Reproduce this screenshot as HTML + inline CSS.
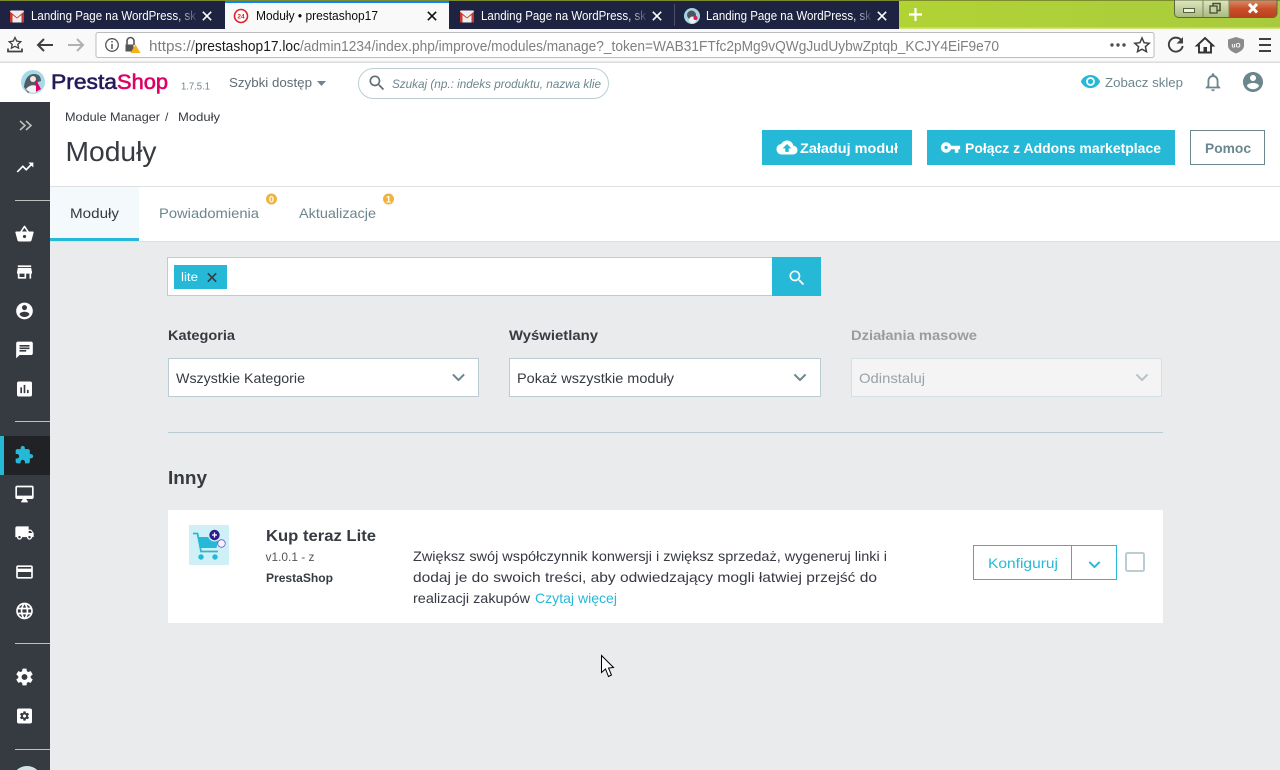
<!DOCTYPE html>
<html lang="pl"><head><meta charset="utf-8"><title>Moduły • prestashop17</title>
<style>
html,body{margin:0;padding:0;width:1280px;height:770px;overflow:hidden;background:#eaebec}
svg{display:block;position:absolute;left:0;top:0}
text{font-family:"Liberation Sans",Arial,sans-serif;font-size:14px;fill:#363a41;white-space:pre}
.b{font-weight:700}
.tab{font-size:12.5px;fill:#fff}
.url{font-size:14.5px;fill:#7f7f7f}
.ic{fill:#fff}
</style></head><body>
<svg width="1280" height="770" viewBox="0 0 1280 770" xmlns="http://www.w3.org/2000/svg">
<defs>
<linearGradient id="lime" x1="0" y1="0" x2="1" y2="0"><stop offset="0" stop-color="#a8cf2c"/><stop offset=".35" stop-color="#bfdc30"/><stop offset=".7" stop-color="#b2d334"/><stop offset="1" stop-color="#a8cb3e"/></linearGradient>
<linearGradient id="fd" x1="0" y1="0" x2="1" y2="0"><stop offset="0" stop-color="#1d2341" stop-opacity="0"/><stop offset="1" stop-color="#1d2341"/></linearGradient>
<linearGradient id="wb" x1="0" y1="0" x2="0" y2="1"><stop offset="0" stop-color="#dfe6c0"/><stop offset="1" stop-color="#a9b87e"/></linearGradient>
<linearGradient id="wr" x1="0" y1="0" x2="0" y2="1"><stop offset="0" stop-color="#d98a6a"/><stop offset=".5" stop-color="#c9502a"/><stop offset="1" stop-color="#b8401c"/></linearGradient>
<symbol id="gm" viewBox="0 0 14 12"><rect width="14" height="12" rx="1" fill="#eee"/><path d="M0 1 7 7 14 1V12H11.5V4.5L7 8 2.5 4.5V12H0Z" fill="#c9372c"/></symbol>
<symbol id="x" viewBox="0 0 12 12"><path d="M1 1 11 11M11 1 1 11" stroke="currentColor" stroke-width="1.9" fill="none"/></symbol>
<symbol id="chev" viewBox="0 0 14 8"><path d="M1 1 7 7 13 1" fill="none" stroke="currentColor" stroke-width="2.2"/></symbol>
<symbol id="search" viewBox="0 0 24 24"><path d="M15.5 14h-.79l-.28-.27C15.41 12.59 16 11.11 16 9.5 16 5.91 13.09 3 9.5 3S3 5.91 3 9.5 5.91 16 9.5 16c1.61 0 3.09-.59 4.23-1.57l.27.28v.79l5 4.99L20.49 19l-4.99-5zm-6 0C7.01 14 5 11.99 5 9.5S7.01 5 9.5 5 14 7.01 14 9.5 11.99 14 9.5 14z"/></symbol>
<symbol id="gear" viewBox="0 0 24 24"><path d="M19.43 12.98c.04-.32.07-.64.07-.98s-.03-.66-.07-.98l2.11-1.65c.19-.15.24-.42.12-.64l-2-3.46c-.12-.22-.39-.3-.61-.22l-2.49 1c-.52-.4-1.08-.73-1.69-.98l-.38-2.65C14.46 2.18 14.25 2 14 2h-4c-.25 0-.46.18-.49.42l-.38 2.65c-.61.25-1.17.59-1.69.98l-2.49-1c-.23-.09-.49 0-.61.22l-2 3.46c-.13.22-.07.49.12.64l2.11 1.65c-.04.32-.07.65-.07.98s.03.66.07.98l-2.11 1.65c-.19.15-.24.42-.12.64l2 3.46c.12.22.39.3.61.22l2.49-1c.52.4 1.08.73 1.69.98l.38 2.65c.03.24.24.42.49.42h4c.25 0 .46-.18.49-.42l.38-2.65c.61-.25 1.17-.59 1.69-.98l2.49 1c.23.09.49 0 .61-.22l2-3.46c.12-.22.07-.49-.12-.64l-2.11-1.65zM12 15.5c-1.93 0-3.5-1.57-3.5-3.5s1.57-3.5 3.5-3.5 3.5 1.57 3.5 3.5-1.57 3.5-3.5 3.5z"/></symbol>
</defs>

<!-- title bar -->
<rect width="1280" height="29" fill="url(#lime)"/>
<rect x="899" y="27.500" width="381" height="1.500" fill="#d2e678"/>
<rect width="1280" height="1" fill="#7d8b2c"/>
<rect x="0" y="1" width="899" height="28" fill="#1d2341"/>
<rect x="225" y="1" width="224" height="28" fill="#f9f9fa"/>
<rect x="225" y="1" width="224" height="2" fill="#0a84ff"/>
<rect x="674" y="4" width="1" height="22" fill="#4a5068"/>

<use href="#gm" x="10" y="10.500" width="14" height="12"/>
<text class="tab" x="31" y="20" textLength="165" lengthAdjust="spacingAndGlyphs">Landing Page na WordPress, sk</text>
<rect x="178" y="3" width="21" height="25" fill="url(#fd)"/>
<use href="#x" x="202" y="11" width="10" height="10" color="#fff"/>

<circle cx="241" cy="16" r="6.500" fill="#fff" stroke="#d8232a" stroke-width="1.600"/>
<text x="241" y="18.500" text-anchor="middle" style="font-size:6.500px;fill:#d8232a;font-weight:700">24</text>
<text class="tab" x="256" y="20" textLength="122" lengthAdjust="spacingAndGlyphs" style="fill:#0c0c0d">Moduły • prestashop17</text>
<use href="#x" x="427" y="11" width="10" height="10" color="#111"/>

<use href="#gm" x="460" y="10.500" width="14" height="12"/>
<text class="tab" x="481" y="20" textLength="165" lengthAdjust="spacingAndGlyphs">Landing Page na WordPress, sk</text>
<rect x="628" y="3" width="21" height="25" fill="url(#fd)"/>
<use href="#x" x="652" y="11" width="10" height="10" color="#fff"/>

<circle cx="692" cy="16" r="8" fill="#a8d4dc"/><circle cx="691.500" cy="15" r="4.500" fill="#4a5560"/><circle cx="692.500" cy="20" r="3.500" fill="#eee"/><circle cx="695.500" cy="18" r="2" fill="#d5185f"/>
<text class="tab" x="706" y="20" textLength="165" lengthAdjust="spacingAndGlyphs">Landing Page na WordPress, sk</text>
<rect x="853" y="3" width="21" height="25" fill="url(#fd)"/>
<use href="#x" x="877" y="11" width="10" height="10" color="#fff"/>

<path d="M915.500 8V21M909 14.500H922" stroke="#fff" stroke-width="2.200" fill="none"/>

<!-- window controls -->
<path d="M1174.500 0H1277V13.500a4 4 0 0 1-4 4H1178.500a4 4 0 0 1-4-4Z" fill="url(#wb)" stroke="#5d6b3c" stroke-width="1"/>
<path d="M1229 .5H1276.500V13.500a3.500 3.500 0 0 1-3.500 3.500H1229Z" fill="url(#wr)"/>
<path d="M1203 0V17M1229 0V17" stroke="#7e8a5e"/>
<rect x="1183.500" y="8.500" width="11" height="4" fill="#eef1e0" stroke="#56603c"/>
<rect x="1213" y="3.500" width="7" height="7" fill="none" stroke="#45502e" stroke-width="1.500"/><rect x="1210" y="6" width="7" height="7" fill="#c5cfa5" stroke="#45502e" stroke-width="1.300"/>
<path d="M1249 4 1257 12.500M1257 4 1249 12.500" stroke="#fff" stroke-width="3"/>

<!-- nav bar -->
<rect y="29" width="1280" height="33" fill="#f9f9fa"/>
<rect y="61.500" width="1280" height="1.500" fill="#dcdcdd"/>
<rect x="96" y="32.500" width="1058" height="25" rx="2" fill="#fff" stroke="#bcbcbe"/>
<g fill="none" stroke="#404040" stroke-width="1.700">
<path d="M15 37.500 16.800 41.200 20.800 41.700 17.800 44.400 18.600 48.200 15 46.300 11.400 48.200 12.200 44.400 9.200 41.700 13.200 41.200Z" stroke-width="1.300"/>
<path d="M8 48.500V51.500H22V48.500"/>
<path d="M53 45H38M44 39 38 45 44 51" stroke-width="2"/>
<path d="M83 45H68M77 39 83 45 77 51" stroke="#b1b1b3" stroke-width="2"/>
</g>
<circle cx="112" cy="45" r="6.300" fill="none" stroke="#555" stroke-width="1.300"/><path d="M112 44V49M112 41V42.500" stroke="#555" stroke-width="1.500"/>
<path d="M127 45V41a3.500 3.500 0 0 1 7 0V45" fill="none" stroke="#555" stroke-width="1.600"/><rect x="125.500" y="44.500" width="8" height="7" fill="#555"/>
<path d="M135.500 44.500 140.500 53H130.500Z" fill="#f6b01e"/>
<text class="url" x="149" y="51" textLength="46" lengthAdjust="spacingAndGlyphs">https://</text>
<text class="url" x="195" y="51" textLength="105" lengthAdjust="spacingAndGlyphs" style="fill:#1a1a1a">prestashop17.loc</text>
<text class="url" x="300" y="51" textLength="699" lengthAdjust="spacingAndGlyphs">/admin1234/index.php/improve/modules/manage?_token=WAB31FTfc2pMg9vQWgJudUybwZptqb_KCJY4EiF9e70</text>
<g fill="#505050"><circle cx="1112" cy="45" r="1.700"/><circle cx="1118" cy="45" r="1.700"/><circle cx="1124" cy="45" r="1.700"/></g>
<path d="M1142 38 1144.100 42.700 1149.200 43.300 1145.400 46.700 1146.500 51.700 1142 49.200 1137.500 51.700 1138.600 46.700 1134.800 43.300 1139.900 42.700Z" fill="none" stroke="#404040" stroke-width="1.500"/>
<path d="M1181.500 40.500a7 7 0 1 0 1.200 5.500" fill="none" stroke="#404040" stroke-width="1.900"/><path d="M1183 37V43.500H1176.500Z" fill="#404040"/>
<path d="M1205 38 1213 45.500H1211V52.500H1199V45.500H1197Z" fill="none" stroke="#333" stroke-width="1.900"/><rect x="1203.500" y="47" width="3.500" height="5.500" fill="#333"/>
<path d="M1236 37 1244 39.500V45.500C1244 49.500 1240 52 1236 53.500 1232 52 1228 49.500 1228 45.500V39.500Z" fill="#8b8b8c"/><text x="1236" y="47.500" text-anchor="middle" style="font-size:6.500px;fill:#fff;font-weight:700">uO</text>
<path d="M1259 39H1271M1259 45H1271M1259 51H1271" stroke="#404040" stroke-width="2"/>

<!-- app header -->
<rect y="63" width="1280" height="123" fill="#fff"/>
<circle cx="33" cy="82" r="12" fill="#a5dbe8"/>
<path d="M24 87C25 78 29 74 34 74 39 74 41 77 41 81L38 82 35 89 28 93Z" fill="#4f5b66"/>
<path d="M26 89C30 84 36 84 40 89 38 93 30 95 26 89Z" fill="#f2f2f2"/>
<circle cx="33" cy="79" r="3" fill="#f3e9dc"/>
<path d="M36 80 41 89 36 92Z" fill="#df0067"/>
<text x="51" y="89" textLength="66" lengthAdjust="spacingAndGlyphs" style="font-size:21px;fill:#251b5b;stroke:#251b5b;stroke-width:.6">Presta</text>
<text x="117" y="89" textLength="51" lengthAdjust="spacingAndGlyphs" style="font-size:21px;fill:#df0067;stroke:#df0067;stroke-width:.6">Shop</text>
<text x="181" y="89.500" textLength="29" lengthAdjust="spacingAndGlyphs" style="font-size:10px;fill:#6c868e">1.7.5.1</text>
<text x="229" y="87" textLength="83" lengthAdjust="spacingAndGlyphs" style="font-size:13px;fill:#5e6c75">Szybki dostęp</text>
<path d="M317 81H326L321.500 86Z" fill="#6c868e"/>
<rect x="358.500" y="68.500" width="250" height="30" rx="15" fill="#fff" stroke="#bbcdd2"/>
<use href="#search" x="367" y="73" width="20" height="20" fill="#5e6c75"/>
<text x="392" y="88" textLength="209" lengthAdjust="spacingAndGlyphs" style="font-size:12px;font-style:italic;fill:#6c868e">Szukaj (np.: indeks produktu, nazwa klie</text>
<svg x="1080" y="71" width="21" height="21" viewBox="0 0 24 24" fill="#25b9d7"><path d="M12 4.500C7 4.500 2.730 7.610 1 12c1.730 4.390 6 7.500 11 7.500s9.270-3.110 11-7.500c-1.730-4.390-6-7.500-11-7.500zM12 17c-2.760 0-5-2.240-5-5s2.240-5 5-5 5 2.240 5 5-2.240 5-5 5zm0-8c-1.660 0-3 1.340-3 3s1.340 3 3 3 3-1.340 3-3-1.340-3-3-3z"/></svg>
<text x="1105" y="87" textLength="78" lengthAdjust="spacingAndGlyphs" style="font-size:13px;fill:#6c868e">Zobacz sklep</text>
<svg x="1202" y="71" width="22" height="22" viewBox="0 0 24 24" fill="#6c868e"><path d="M12 22c1.100 0 2-.9 2-2h-4c0 1.100.9 2 2 2zm6-6v-5c0-3.070-1.630-5.640-4.500-6.320V4c0-.83-.67-1.500-1.500-1.500s-1.500.67-1.500 1.500v.68C7.640 5.360 6 7.920 6 11v5l-2 2v1h16v-1l-2-2zm-2 1H8v-6c0-2.480 1.510-4.500 4-4.500s4 2.020 4 4.500v6z"/></svg>
<svg x="1241" y="70" width="24" height="24" viewBox="0 0 24 24" fill="#6c868e"><path d="M12 2C6.480 2 2 6.480 2 12s4.480 10 10 10 10-4.480 10-10S17.520 2 12 2zm0 3c1.660 0 3 1.340 3 3s-1.340 3-3 3-3-1.340-3-3 1.340-3 3-3zm0 14.200c-2.500 0-4.710-1.280-6-3.220.03-1.990 4-3.080 6-3.080 1.990 0 5.970 1.090 6 3.080-1.290 1.940-3.500 3.220-6 3.220z"/></svg>

<text x="65" y="121" textLength="95" lengthAdjust="spacingAndGlyphs" style="font-size:12px">Module Manager</text>
<text x="165" y="121" style="font-size:12px">/</text>
<text x="178" y="121" textLength="42" lengthAdjust="spacingAndGlyphs" style="font-size:12px">Moduły</text>
<text x="65.500" y="161" textLength="91" lengthAdjust="spacingAndGlyphs" style="font-size:28px">Moduły</text>

<rect x="762" y="130" width="150" height="35" fill="#25b9d7"/>
<svg x="776.500" y="137" width="21" height="21" viewBox="0 0 24 24" fill="#fff"><path d="M19.350 10.040C18.670 6.590 15.640 4 12 4 9.110 4 6.600 5.640 5.350 8.040 2.340 8.360 0 10.910 0 14c0 3.310 2.690 6 6 6h13c2.760 0 5-2.240 5-5 0-2.640-2.050-4.780-4.650-4.960zM14 13v4h-4v-4H7l5-5 5 5h-3z"/></svg>
<text class="b" x="800" y="153" textLength="98" lengthAdjust="spacingAndGlyphs" style="fill:#fff">Załaduj moduł</text>
<rect x="927" y="130" width="248" height="35" fill="#25b9d7"/>
<svg x="940" y="137" width="21" height="21" viewBox="0 0 24 24" fill="#fff"><path d="M12.650 10C11.830 7.670 9.610 6 7 6c-3.310 0-6 2.690-6 6s2.690 6 6 6c2.610 0 4.830-1.670 5.650-4H17v4h4v-4h2v-4H12.650zM7 14c-1.100 0-2-.9-2-2s.9-2 2-2 2 .9 2 2-.9 2-2 2z"/></svg>
<text class="b" x="965" y="153" textLength="196" lengthAdjust="spacingAndGlyphs" style="fill:#fff">Połącz z Addons marketplace</text>
<rect x="1190.500" y="130.500" width="74" height="34" fill="#fff" stroke="#6c868e"/>
<text class="b" x="1205" y="153" textLength="46" lengthAdjust="spacingAndGlyphs" style="fill:#6c868e">Pomoc</text>

<!-- tabs -->
<rect y="186" width="1280" height="1" fill="#dfdfdf"/>
<rect y="187" width="1280" height="54" fill="#fff"/>
<rect y="241" width="1280" height="1" fill="#dcdee0"/>
<rect x="50" y="187" width="89" height="51" fill="#f4f9fb"/>
<rect x="50" y="238" width="89" height="3" fill="#25b9d7"/>
<text x="70" y="218" textLength="49" lengthAdjust="spacingAndGlyphs">Moduły</text>
<text x="159" y="218" textLength="100" lengthAdjust="spacingAndGlyphs" style="fill:#6c868e">Powiadomienia</text>
<text x="299" y="218" textLength="77" lengthAdjust="spacingAndGlyphs" style="fill:#6c868e">Aktualizacje</text>
<circle cx="271.500" cy="199" r="5.500" fill="#f2b240"/><text x="271.500" y="202.500" text-anchor="middle" style="font-size:9px;fill:#fff;font-weight:700">0</text>
<circle cx="388.500" cy="199" r="5.500" fill="#f2b240"/><text x="388.500" y="202.500" text-anchor="middle" style="font-size:9px;fill:#fff;font-weight:700">1</text>

<!-- sidebar -->
<rect y="102" width="50" height="668" fill="#363a41"/>
<path d="M20 121 25 125.500 20 130M26 121 31 125.500 26 130" fill="none" stroke="#bebebe" stroke-width="1.600"/>
<g fill="#bebebe"><rect x="15" y="200" width="35" height="1"/><rect x="15" y="421" width="35" height="1"/><rect x="15" y="643" width="35" height="1"/><rect x="15" y="749" width="35" height="1"/></g>
<rect y="436" width="50" height="39" fill="#202226"/><rect y="436" width="4" height="39" fill="#25b9d7"/>
<g class="ic">
<svg x="15" y="157.500" width="20" height="20" viewBox="0 0 24 24"><path d="M16 6l2.290 2.290-4.880 4.880-4-4L2 16.590 3.410 18l6-6 4 4 6.300-6.290L22 12V6z"/></svg>
<svg x="14.500" y="224" width="20" height="20" viewBox="0 0 24 24"><path d="M17.210 9l-4.380-6.560c-.19-.28-.51-.42-.83-.42-.32 0-.64.14-.83.43L6.790 9H2c-.55 0-1 .45-1 1 0 .09.01.18.04.27l2.540 9.270c.23.84 1 1.460 1.920 1.460h13c.92 0 1.690-.62 1.930-1.460l2.540-9.270L23 10c0-.55-.45-1-1-1h-4.790zM9 9l3-4.400L15 9H9zm3 8c-1.100 0-2-.9-2-2s.9-2 2-2 2 .9 2 2-.9 2-2 2z"/></svg>
<svg x="14.500" y="262" width="20" height="20" viewBox="0 0 24 24"><path d="M20 4H4v2h16V4zm1 10v-2l-1-5H4l-1 5v2h1v6h10v-6h4v6h2v-6h1zm-9 4H6v-4h6v4z"/></svg>
<svg x="14.500" y="301" width="20" height="20" viewBox="0 0 24 24"><path d="M12 2C6.480 2 2 6.480 2 12s4.480 10 10 10 10-4.480 10-10S17.520 2 12 2zm0 3c1.660 0 3 1.340 3 3s-1.340 3-3 3-3-1.340-3-3 1.340-3 3-3zm0 14.200c-2.500 0-4.710-1.280-6-3.220.03-1.990 4-3.080 6-3.080 1.990 0 5.970 1.090 6 3.080-1.290 1.940-3.500 3.220-6 3.220z"/></svg>
<svg x="14.500" y="340" width="20" height="20" viewBox="0 0 24 24"><path d="M20 2H4c-1.100 0-1.990.9-1.990 2L2 22l4-4h14c1.100 0 2-.9 2-2V4c0-1.100-.9-2-2-2zM6 9h12v2H6V9zm8 5H6v-2h8v2zm4-6H6V6h12v2z"/></svg>
<svg x="14.500" y="379" width="20" height="20" viewBox="0 0 24 24"><path d="M19 3H5c-1.100 0-2 .9-2 2v14c0 1.100.9 2 2 2h14c1.100 0 2-.9 2-2V5c0-1.100-.9-2-2-2zM9 17H7v-7h2v7zm4 0h-2V7h2v10zm4 0h-2v-4h2v4z"/></svg>
<svg x="14" y="445" width="20" height="20" viewBox="0 0 24 24" fill="#25b9d7"><path d="M20.500 11H19V7c0-1.100-.9-2-2-2h-4V3.500C13 2.120 11.880 1 10.500 1S8 2.120 8 3.500V5H4c-1.100 0-1.990.9-1.990 2v3.800H3.500c1.490 0 2.700 1.210 2.700 2.700s-1.210 2.700-2.700 2.700H2V20c0 1.100.9 2 2 2h3.800v-1.500c0-1.490 1.210-2.700 2.700-2.700 1.490 0 2.700 1.210 2.700 2.700V22H17c1.100 0 2-.9 2-2v-4h1.500c1.380 0 2.500-1.120 2.500-2.500S21.880 11 20.500 11z"/></svg>
<svg x="14.500" y="484" width="20" height="20" viewBox="0 0 24 24"><path d="M21 2H3c-1.100 0-2 .9-2 2v12c0 1.100.9 2 2 2h7l-2 3v1h8v-1l-2-3h7c1.100 0 2-.9 2-2V4c0-1.100-.9-2-2-2zm0 12H3V4h18v10z"/></svg>
<svg x="14.500" y="523" width="20" height="20" viewBox="0 0 24 24"><path d="M20 8h-3V4H3c-1.100 0-2 .9-2 2v11h2c0 1.660 1.340 3 3 3s3-1.340 3-3h6c0 1.660 1.340 3 3 3s3-1.340 3-3h2v-5l-3-4zM6 18.500c-.83 0-1.500-.67-1.500-1.500s.67-1.500 1.500-1.500 1.500.67 1.500 1.500-.67 1.500-1.500 1.500zm13.500-9l1.960 2.500H17V9.500h2.500zm-1.500 9c-.83 0-1.500-.67-1.500-1.500s.67-1.500 1.500-1.500 1.500.67 1.500 1.500-.67 1.500-1.500 1.500z"/></svg>
<svg x="14.500" y="562" width="20" height="20" viewBox="0 0 24 24"><path d="M20 4H4c-1.110 0-1.990.89-1.990 2L2 18c0 1.110.89 2 2 2h16c1.110 0 2-.89 2-2V6c0-1.110-.89-2-2-2zm0 14H4v-6h16v6zm0-10H4V6h16v2z"/></svg>
<svg x="14.500" y="601" width="20" height="20" viewBox="0 0 24 24"><path d="M11.990 2C6.470 2 2 6.480 2 12s4.470 10 9.990 10C17.520 22 22 17.520 22 12S17.520 2 11.990 2zm6.930 6h-2.950c-.32-1.250-.78-2.450-1.380-3.560 1.840.63 3.370 1.910 4.330 3.560zM12 4.040c.83 1.200 1.480 2.530 1.910 3.960h-3.820c.43-1.430 1.080-2.760 1.910-3.960zM4.260 14C4.100 13.360 4 12.690 4 12s.1-1.360.26-2h3.380c-.08.66-.14 1.320-.14 2 0 .68.06 1.340.14 2H4.260zm.82 2h2.950c.32 1.250.78 2.450 1.380 3.560-1.840-.63-3.370-1.900-4.330-3.560zm2.950-8H5.080c.96-1.660 2.490-2.930 4.330-3.560C8.810 5.550 8.350 6.750 8.030 8zM12 19.960c-.83-1.200-1.480-2.530-1.910-3.960h3.820c-.43 1.430-1.080 2.760-1.910 3.960zM14.340 14H9.660c-.09-.66-.16-1.320-.16-2 0-.68.07-1.350.16-2h4.680c.09.650.16 1.320.16 2 0 .68-.07 1.340-.16 2zm.25 5.560c.6-1.110 1.060-2.310 1.380-3.560h2.950c-.96 1.650-2.490 2.930-4.330 3.560zM16.360 14c.08-.66.14-1.320.14-2 0-.68-.06-1.340-.14-2h3.380c.16.640.26 1.310.26 2s-.1 1.360-.26 2h-3.380z"/></svg>
<use href="#gear" x="14.500" y="667" width="20" height="20" fill="#fff"/>
<rect x="17" y="708.500" width="15" height="15" rx="2" fill="#fff"/>
<use href="#gear" x="19" y="710.500" width="11" height="11" fill="#363a41"/>
</g>
<circle cx="27" cy="781" r="15" fill="#cfe3ea"/>

<!-- search -->
<rect x="167.500" y="257.500" width="605" height="38" fill="#fff" stroke="#bbcdd2"/>
<rect x="174" y="265" width="53" height="24" fill="#25b9d7"/>
<text x="181" y="281" textLength="17" lengthAdjust="spacingAndGlyphs" style="font-size:11.500px;fill:#fff">lite</text>
<use href="#x" x="207" y="272.500" width="10" height="10" color="#363a41"/>
<rect x="772" y="257" width="49" height="39" fill="#25b9d7"/>
<use href="#search" x="787" y="268" width="20" height="20" fill="#fff"/>

<!-- filters -->
<text class="b" x="168" y="340" textLength="67" lengthAdjust="spacingAndGlyphs">Kategoria</text>
<text class="b" x="509" y="340" textLength="89" lengthAdjust="spacingAndGlyphs">Wyświetlany</text>
<text class="b" x="851" y="340" textLength="126" lengthAdjust="spacingAndGlyphs" style="fill:#9a9c9f">Działania masowe</text>
<rect x="168.500" y="358.500" width="310" height="38" fill="#fff" stroke="#bbcdd2"/>
<rect x="509.500" y="358.500" width="311" height="38" fill="#fff" stroke="#bbcdd2"/>
<rect x="851.500" y="358.500" width="310" height="38" fill="#f4f4f4" stroke="#d3e0e4"/>
<text x="176" y="383" textLength="129" lengthAdjust="spacingAndGlyphs">Wszystkie Kategorie</text>
<text x="517" y="383" textLength="157" lengthAdjust="spacingAndGlyphs">Pokaż wszystkie moduły</text>
<text x="859" y="383" textLength="66" lengthAdjust="spacingAndGlyphs" style="fill:#9aa1a7">Odinstaluj</text>
<use href="#chev" x="452" y="373.500" width="13" height="7.500" color="#6c868e"/>
<use href="#chev" x="793.500" y="373.500" width="13" height="7.500" color="#6c868e"/>
<use href="#chev" x="1135.500" y="373.500" width="13" height="7.500" color="#b7c2c6"/>
<rect x="168" y="432" width="995" height="1" fill="#bbcdd2"/>

<text class="b" x="168" y="484" textLength="39" lengthAdjust="spacingAndGlyphs" style="font-size:18.500px">Inny</text>

<!-- card -->
<rect x="168" y="510" width="995" height="113" fill="#fff"/>
<rect x="189" y="525" width="40" height="40" fill="#d0f0f7"/>
<path d="M193 533.500H197.500L201 551.500H218" fill="none" stroke="#25b9d7" stroke-width="1.800"/>
<path d="M197.500 537H219L216.500 548H200Z" fill="#25b9d7"/><circle cx="201" cy="557" r="2.700" fill="#25b9d7"/><circle cx="215" cy="557" r="2.700" fill="#25b9d7"/>
<circle cx="214.500" cy="535" r="6.500" fill="#d0f0f7"/><circle cx="214.500" cy="535" r="5.200" fill="#2b1d8c"/><path d="M212 535H217M214.500 532.500V537.500" stroke="#fff" stroke-width="1.300"/>
<circle cx="221.500" cy="543.500" r="3.800" fill="#f4f2fc" stroke="#6a5acd" stroke-width=".8"/>
<text class="b" x="266" y="541" textLength="110" lengthAdjust="spacingAndGlyphs" style="font-size:16px">Kup teraz Lite</text>
<text x="265.500" y="561" textLength="49" lengthAdjust="spacingAndGlyphs" style="font-size:11.500px;fill:#555">v1.0.1 - z</text>
<text class="b" x="266" y="582" textLength="67" lengthAdjust="spacingAndGlyphs" style="font-size:11.500px">PrestaShop</text>
<text x="413" y="561" textLength="474" lengthAdjust="spacingAndGlyphs">Zwiększ swój współczynnik konwersji i zwiększ sprzedaż, wygeneruj linki i</text>
<text x="413" y="582" textLength="464" lengthAdjust="spacingAndGlyphs">dodaj je do swoich treści, aby odwiedzający mogli łatwiej przejść do</text>
<text x="413" y="603" textLength="117" lengthAdjust="spacingAndGlyphs">realizacji zakupów</text>
<text x="535" y="603" textLength="82" lengthAdjust="spacingAndGlyphs" style="fill:#25b9d7">Czytaj więcej</text>
<rect x="973.500" y="545.500" width="143" height="34" fill="#fff" stroke="#25b9d7"/>
<rect x="1071" y="545" width="1" height="35" fill="#25b9d7"/>
<text x="988" y="568" textLength="70" lengthAdjust="spacingAndGlyphs" style="fill:#25b9d7">Konfiguruj</text>
<use href="#chev" x="1088.500" y="561" width="12" height="7" color="#25b9d7"/>
<rect x="1126" y="553" width="18" height="18" rx="1.500" fill="#fff" stroke="#bbcdd2" stroke-width="2"/>

<!-- cursor -->
<path d="M601.500 655.500V672.500L605.500 669 608.500 676.500 611.500 675 608.500 668 613.500 667.500Z" fill="#fff" stroke="#000" stroke-width="1"/>
</svg>
</body></html>
